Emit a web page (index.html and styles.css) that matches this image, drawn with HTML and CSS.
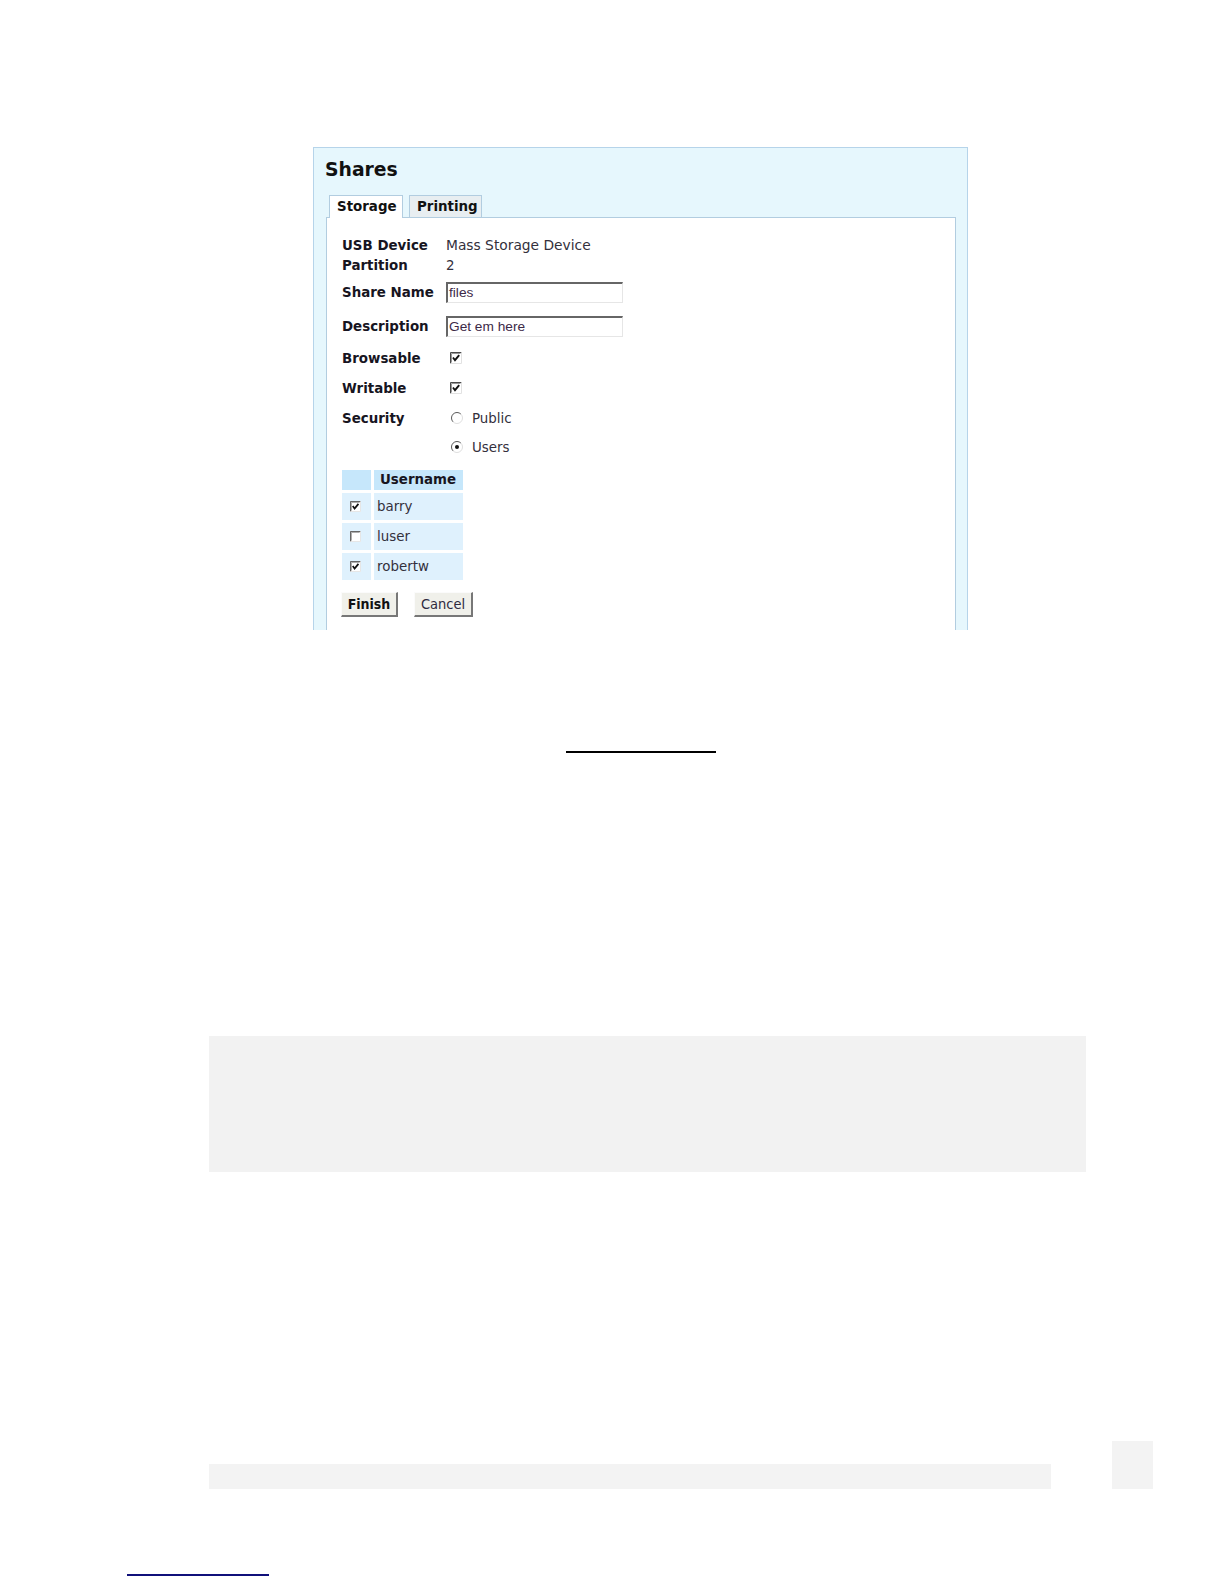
FILE: index.html
```html
<!DOCTYPE html>
<html>
<head>
<meta charset="utf-8">
<title>Shares</title>
<link rel="stylesheet" href="styles.css">
</head>
<body>
<div class="page">
  <div class="panel">
    <h1 class="title">Shares</h1>
    <div class="tabs">
      <div class="tab active">Storage</div>
      <div class="tab other">Printing</div>
    </div>
    <div class="tabbox">
      <div class="row r-usb"><span class="label">USB Device</span><span class="value wide">Mass Storage Device</span></div>
      <div class="row r-part"><span class="label">Partition</span><span class="value">2</span></div>
      <div class="row r-name"><span class="label">Share Name</span><span class="input">files</span></div>
      <div class="row r-desc"><span class="label">Description</span><span class="input">Get em here</span></div>
      <div class="row r-browse"><span class="label">Browsable</span>
        <span class="ctl"><svg class="cb" viewBox="0 0 12 12" width="12" height="12"><rect x="0" y="0" width="12" height="12" fill="#fff"/><path d="M0.5 11.5V0.5H11.5" fill="none" stroke="#4a4a4a" stroke-width="1"/><path d="M1.5 10.5V1.5H10.5" fill="none" stroke="#999" stroke-width="1"/><path d="M0.5 11.5H11.5V0.5" fill="none" stroke="#e2e2e2" stroke-width="1"/><path d="M3 5.5L5 8.2L9.2 3.2" fill="none" stroke="#111" stroke-width="1.9"/></svg></span></div>
      <div class="row r-write"><span class="label">Writable</span>
        <span class="ctl"><svg class="cb" viewBox="0 0 12 12" width="12" height="12"><rect x="0" y="0" width="12" height="12" fill="#fff"/><path d="M0.5 11.5V0.5H11.5" fill="none" stroke="#4a4a4a" stroke-width="1"/><path d="M1.5 10.5V1.5H10.5" fill="none" stroke="#999" stroke-width="1"/><path d="M0.5 11.5H11.5V0.5" fill="none" stroke="#e2e2e2" stroke-width="1"/><path d="M3 5.5L5 8.2L9.2 3.2" fill="none" stroke="#111" stroke-width="1.9"/></svg></span></div>
      <div class="row r-sec"><span class="label">Security</span>
        <span class="ctl radio"><svg viewBox="0 0 12 12" width="12" height="12"><circle cx="6" cy="6" r="5.5" fill="#fff"/><path d="M2.1 9.9A5.5 5.5 0 0 1 9.9 2.1" fill="none" stroke="#5a5a5a" stroke-width="1"/><path d="M9.9 2.1A5.5 5.5 0 0 1 2.1 9.9" fill="none" stroke="#dedede" stroke-width="1"/></svg><span class="opt">Public</span></span></div>
      <div class="row r-users"><span class="label"></span>
        <span class="ctl radio"><svg viewBox="0 0 12 12" width="12" height="12"><circle cx="6" cy="6" r="5.5" fill="#fff"/><path d="M2.1 9.9A5.5 5.5 0 0 1 9.9 2.1" fill="none" stroke="#5a5a5a" stroke-width="1"/><path d="M9.9 2.1A5.5 5.5 0 0 1 2.1 9.9" fill="none" stroke="#dedede" stroke-width="1"/><circle cx="6" cy="6" r="2" fill="#111"/></svg><span class="opt">Users</span></span></div>

      <div class="users">
        <div class="th"></div>
        <div class="th name">Username</div>
        <div class="td chk"><svg viewBox="0 0 12 12" width="11" height="11"><rect width="12" height="12" fill="#fff"/><path d="M0.5 11.5V0.5H11.5" fill="none" stroke="#4a4a4a"/><path d="M1.5 10.5V1.5H10.5" fill="none" stroke="#999"/><path d="M0.5 11.5H11.5V0.5" fill="none" stroke="#e2e2e2"/><path d="M3 5.5L5 8.2L9.2 3.2" fill="none" stroke="#111" stroke-width="1.9"/></svg></div>
        <div class="td">barry</div>
        <div class="td chk"><svg viewBox="0 0 12 12" width="11" height="11"><rect width="12" height="12" fill="#fff"/><path d="M0.5 11.5V0.5H11.5" fill="none" stroke="#4a4a4a"/><path d="M1.5 10.5V1.5H10.5" fill="none" stroke="#999"/><path d="M0.5 11.5H11.5V0.5" fill="none" stroke="#e2e2e2"/></svg></div>
        <div class="td">luser</div>
        <div class="td chk"><svg viewBox="0 0 12 12" width="11" height="11"><rect width="12" height="12" fill="#fff"/><path d="M0.5 11.5V0.5H11.5" fill="none" stroke="#4a4a4a"/><path d="M1.5 10.5V1.5H10.5" fill="none" stroke="#999"/><path d="M0.5 11.5H11.5V0.5" fill="none" stroke="#e2e2e2"/><path d="M3 5.5L5 8.2L9.2 3.2" fill="none" stroke="#111" stroke-width="1.9"/></svg></div>
        <div class="td">robertw</div>
      </div>

      <div class="buttons">
        <span class="btn finish">Finish</span>
        <span class="btn cancel">Cancel</span>
      </div>
    </div>
  </div>

  <div class="rule"></div>
  <div class="graybox"></div>
  <div class="bottom">
    <div class="graybar"></div>
    <div class="graysq"></div>
  </div>
  <div class="footrule"></div>
</div>
</body>
</html>
```

FILE: styles.css
```css
html, body {
  margin: 0;
  padding: 0;
  background: #fff;
}
.page {
  width: 1224px;
  height: 1584px;
  padding-top: 147px;
  box-sizing: border-box;
  overflow: hidden;
  font-family: "DejaVu Sans", Verdana, sans-serif;
}
.panel {
  margin-left: 313px;
  width: 653px;
  height: 482px;
  border: 1px solid #b6d4ea;
  border-bottom: none;
  background: #e6f7fd;
  display: flex;
  flex-direction: column;
  overflow: hidden;
}
.title {
  margin: 11px 0 0 11px;
  font-size: 18.8px;
  line-height: 22px;
  font-weight: bold;
  color: #111;
}
.tabs {
  margin: 14px 0 0 15px;
  display: flex;
  align-items: flex-end;
  gap: 6px;
}
.tab {
  height: 21px;
  border: 1px solid #b2cde0;
  border-bottom: none;
  font-size: 13.4px;
  font-weight: bold;
  line-height: 21px;
  color: #111;
  padding-left: 7px;
}
.tab.active {
  width: 65px;
  height: 22px;
  background: #fff;
  margin-bottom: -1px;
  position: relative;
  z-index: 1;
}
.tab.other {
  width: 64px;
  background: #e8eef1;
}
.tabbox {
  margin: 0 11px 0 12px;
  flex: 1;
  background: #fff;
  border: 1px solid #b2cde0;
  border-bottom: none;
  padding: 17px 0 0 15px;
  display: flex;
  flex-direction: column;
}
.row {
  display: flex;
  align-items: center;
  height: 20px;
  font-size: 13.4px;
}
.label {
  width: 104px;
  flex: none;
  font-weight: bold;
  color: #17151f;
}
.value {
  color: #33303c;
}
.value.wide {
  font-size: 13.8px;
}
.r-name { height: 21px; margin-top: 7px; }
.r-desc { height: 21px; margin-top: 13px; }
.r-browse { margin-top: 11px; }
.r-write { margin-top: 10px; }
.r-sec { margin-top: 10px; }
.r-users { margin-top: 9px; }
.input {
  width: 173px;
  height: 18px;
  border: 2px solid #e6e6e6;
  border-top-color: #666;
  border-left-color: #666;
  border-right-width: 1px;
  border-bottom-width: 1px;
  padding-left: 1px;
  font-family: "Liberation Sans", Arial, sans-serif;
  font-size: 13.7px;
  line-height: 18px;
  color: #3d2a48;
}
.ctl {
  display: flex;
  align-items: center;
  padding-left: 4px;
}
.ctl svg { display: block; }
.radio { padding-left: 5px; }
.opt {
  margin-left: 9px;
  color: #33303c;
}
.users {
  margin-top: 13px;
  display: grid;
  grid-template-columns: 29px 89px;
  grid-template-rows: 20px 27px 27px 27px;
  gap: 3px;
  font-size: 13.4px;
}
.th {
  background: #c6e7fb;
  font-weight: bold;
  color: #17151f;
  line-height: 20px;
}
.th.name { padding-left: 6px; }
.td {
  background: #dff1fd;
  color: #33303c;
  display: flex;
  align-items: center;
  padding-left: 3px;
}
.td.chk { padding-left: 8px; }
.td svg { display: block; }
.buttons {
  margin: 12px 0 0 -1px;
  display: flex;
  gap: 16px;
}
.btn {
  height: 22px;
  border: 2px solid #777;
  border-top: 1px solid #fbfbfb;
  border-left: 1px solid #fbfbfb;
  background: #f0f0ea;
  color: #111;
  line-height: 22px;
  text-align: center;
}
.finish {
  width: 54px;
  font-family: "DejaVu Sans Condensed", "DejaVu Sans", sans-serif;
  font-weight: bold;
  font-size: 14px;
}
.cancel {
  width: 56px;
  font-family: "DejaVu Sans Condensed", "DejaVu Sans", sans-serif;
  font-size: 14.5px;
  color: #2e2a40;
}
.rule {
  margin: 121px 0 0 566px;
  width: 150px;
  height: 2px;
  background: #000;
}
.graybox {
  margin: 283px 0 0 209px;
  width: 877px;
  height: 136px;
  background: #f2f2f2;
}
.bottom {
  margin: 269px 0 0 209px;
  display: flex;
  align-items: flex-end;
  gap: 61px;
}
.graybar {
  width: 842px;
  height: 25px;
  background: #f3f3f3;
}
.graysq {
  width: 41px;
  height: 48px;
  background: #f3f3f3;
}
.footrule {
  margin: 85px 0 0 127px;
  width: 142px;
  height: 2px;
  background: #10107a;
}
```
